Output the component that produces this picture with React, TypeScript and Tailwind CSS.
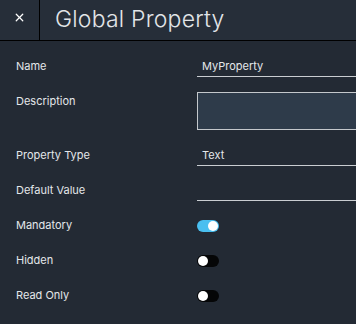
import { X } from 'lucide-react'

// --- Rows -------------------------------------------------------------------

function Label({ children }: { children: string }) {
  return (
    <div className="flex h-[35px] w-[197px] shrink-0 items-center pl-4 text-[11px] text-[#e4e7ea]">
      {children}
    </div>
  )
}

function TextField({ value }: { value?: string }) {
  return (
    <div className="flex h-[20px] w-[200px] shrink-0 items-center border-b border-[#c9cdd1] pl-[5px] text-[11px] text-[#e4e7ea]">
      {value}
    </div>
  )
}

function Toggle({ on }: { on?: boolean }) {
  return (
    <div
      className={`flex h-[12px] w-[22px] shrink-0 items-center rounded-full px-[1px] ${
        on ? 'justify-end bg-[#49bff0]' : 'justify-start bg-[#050607]'
      }`}
    >
      <div className="h-[10px] w-[10px] rounded-full bg-white" />
    </div>
  )
}

// --- Component --------------------------------------------------------------

export default function App() {
  return (
    <div
      className="h-[324px] w-[356px] overflow-hidden bg-[#232a34]"
      style={{ fontFamily: 'Inter, "Noto Sans", sans-serif' }}
    >
      {/* Header */}
      <div className="flex h-[41px] border-b border-black bg-[#262e39]">
        <div className="flex w-[40px] items-center justify-center border-r border-black pb-[6px]">
          <X className="h-[13px] w-[13px] text-white" strokeWidth={2.3} />
        </div>
        <h1 className="flex items-center pl-[15px] pb-[2px] text-[23px] font-light tracking-[0.2px] text-[#e2e5e8]">
          Global Property
        </h1>
      </div>

      {/* Form */}
      <div className="flex flex-col pt-[8px]">
        <div className="flex h-[35px] items-center">
          <Label>Name</Label>
          <TextField value="MyProperty" />
        </div>
        <div className="flex h-[54px] items-start">
          <Label>Description</Label>
          <div className="mt-[8px] h-[38px] w-[200px] shrink-0 border border-[#c4c8cc] bg-[#2e3b4a]" />
        </div>
        <div className="flex h-[35px] items-center">
          <Label>Property Type</Label>
          <TextField value="Text" />
        </div>
        <div className="flex h-[35px] items-center">
          <Label>Default Value</Label>
          <TextField />
        </div>
        <div className="flex h-[35px] items-center">
          <Label>Mandatory</Label>
          <Toggle on />
        </div>
        <div className="flex h-[35px] items-center">
          <Label>Hidden</Label>
          <Toggle />
        </div>
        <div className="flex h-[35px] items-center">
          <Label>Read Only</Label>
          <Toggle />
        </div>
      </div>
    </div>
  )
}
